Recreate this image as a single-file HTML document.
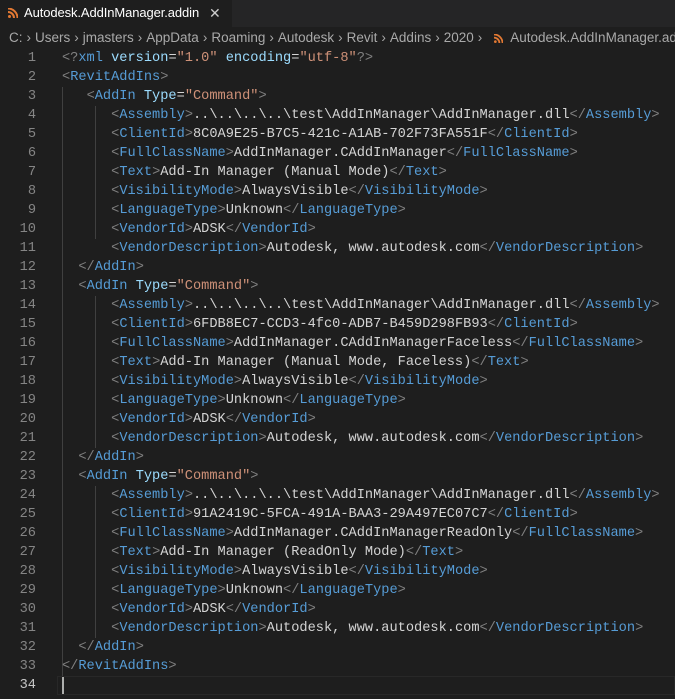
<!DOCTYPE html>
<html><head><meta charset="utf-8"><style>
body{margin:0;width:675px;height:699px;background:#1e1e1e;overflow:hidden;font-family:"Liberation Sans",sans-serif}
.tabbar{height:27px;background:#252526;position:relative}
.tab{position:absolute;left:0;top:0;width:232px;height:27px;background:#1e1e1e;color:#fff;font-size:13px;line-height:26px}
.tab .n{position:absolute;left:24px;letter-spacing:-0.1px}
.tab .x{position:absolute;left:209px;top:0;font-size:14px;color:#ccc}
.rss{position:absolute;width:10px;height:10px}
.bc{position:absolute;top:27px;height:22px;line-height:22px;color:#a9a9a9;font-size:13.5px;white-space:nowrap;left:9px}
.bc i{font-style:normal;margin:0 4px 0 4px}
.ed{position:absolute;top:48.5px;left:0;right:0;font-family:"Liberation Mono",monospace;font-size:13.65px}
.l{height:19px;line-height:19px;position:relative;white-space:pre}
.ln{position:absolute;left:0;width:36px;text-align:right;color:#858585}
.c{position:absolute;left:62px;color:#d4d4d4}
.p{color:#808080}.t{color:#569cd6}.a{color:#9cdcfe}.s{color:#ce9178}
.g{position:absolute;width:1px;background:#404040}
.cur{position:absolute;left:57px;right:0;top:627px;height:17px;border:1px solid #282828}
</style></head><body>
<div class="tabbar"><div class="tab">
<svg class="rss" style="left:8px;top:8px" viewBox="0 0 10 10"><circle cx="1.5" cy="8.5" r="1.5" fill="#e37933"/><path d="M0 4a6 6 0 0 1 6 6M0 0.5a9.5 9.5 0 0 1 9.5 9.5" stroke="#e37933" stroke-width="2" fill="none"/></svg>
<span class="n">Autodesk.AddInManager.addin</span><span class="x">✕</span></div></div>
<div class="bc">C:<i>›</i>Users<i>›</i>jmasters<i>›</i>AppData<i>›</i>Roaming<i>›</i>Autodesk<i>›</i>Revit<i>›</i>Addins<i>›</i>2020<i>›</i><svg style="display:inline-block;vertical-align:-1px;margin:0 7px 0 8px" width="9" height="9" viewBox="0 0 10 10"><circle cx="1.5" cy="8.5" r="1.5" fill="#e37933"/><path d="M0 4a6 6 0 0 1 6 6M0 0.5a9.5 9.5 0 0 1 9.5 9.5" stroke="#e37933" stroke-width="2" fill="none"/></svg>Autodesk.AddInManager.addin</div>
<div class="ed">
<div class="cur"></div>
<div class="g" style="left:62px;top:38px;height:589px"></div>
<div class="g" style="left:95px;top:57px;height:133px"></div>
<div class="g" style="left:95px;top:247px;height:152px"></div>
<div class="g" style="left:95px;top:437px;height:152px"></div>
<div class="l"><span class="ln">1</span><span class="c"><span class="p">&lt;?</span><span class="t">xml</span> <span class="a">version</span>=<span class="s">"1.0"</span> <span class="a">encoding</span>=<span class="s">"utf-8"</span><span class="p">?&gt;</span></span></div>
<div class="l"><span class="ln">2</span><span class="c"><span class="p">&lt;</span><span class="t">RevitAddIns</span><span class="p">&gt;</span></span></div>
<div class="l"><span class="ln">3</span><span class="c">   <span class="p">&lt;</span><span class="t">AddIn</span> <span class="a">Type</span>=<span class="s">"Command"</span><span class="p">&gt;</span></span></div>
<div class="l"><span class="ln">4</span><span class="c">      <span class="p">&lt;</span><span class="t">Assembly</span><span class="p">&gt;</span>..\..\..\..\test\AddInManager\AddInManager.dll<span class="p">&lt;/</span><span class="t">Assembly</span><span class="p">&gt;</span></span></div>
<div class="l"><span class="ln">5</span><span class="c">      <span class="p">&lt;</span><span class="t">ClientId</span><span class="p">&gt;</span>8C0A9E25-B7C5-421c-A1AB-702F73FA551F<span class="p">&lt;/</span><span class="t">ClientId</span><span class="p">&gt;</span></span></div>
<div class="l"><span class="ln">6</span><span class="c">      <span class="p">&lt;</span><span class="t">FullClassName</span><span class="p">&gt;</span>AddInManager.CAddInManager<span class="p">&lt;/</span><span class="t">FullClassName</span><span class="p">&gt;</span></span></div>
<div class="l"><span class="ln">7</span><span class="c">      <span class="p">&lt;</span><span class="t">Text</span><span class="p">&gt;</span>Add-In Manager (Manual Mode)<span class="p">&lt;/</span><span class="t">Text</span><span class="p">&gt;</span></span></div>
<div class="l"><span class="ln">8</span><span class="c">      <span class="p">&lt;</span><span class="t">VisibilityMode</span><span class="p">&gt;</span>AlwaysVisible<span class="p">&lt;/</span><span class="t">VisibilityMode</span><span class="p">&gt;</span></span></div>
<div class="l"><span class="ln">9</span><span class="c">      <span class="p">&lt;</span><span class="t">LanguageType</span><span class="p">&gt;</span>Unknown<span class="p">&lt;/</span><span class="t">LanguageType</span><span class="p">&gt;</span></span></div>
<div class="l"><span class="ln">10</span><span class="c">      <span class="p">&lt;</span><span class="t">VendorId</span><span class="p">&gt;</span>ADSK<span class="p">&lt;/</span><span class="t">VendorId</span><span class="p">&gt;</span></span></div>
<div class="l"><span class="ln">11</span><span class="c">      <span class="p">&lt;</span><span class="t">VendorDescription</span><span class="p">&gt;</span>Autodesk, www.autodesk.com<span class="p">&lt;/</span><span class="t">VendorDescription</span><span class="p">&gt;</span></span></div>
<div class="l"><span class="ln">12</span><span class="c">  <span class="p">&lt;/</span><span class="t">AddIn</span><span class="p">&gt;</span></span></div>
<div class="l"><span class="ln">13</span><span class="c">  <span class="p">&lt;</span><span class="t">AddIn</span> <span class="a">Type</span>=<span class="s">"Command"</span><span class="p">&gt;</span></span></div>
<div class="l"><span class="ln">14</span><span class="c">      <span class="p">&lt;</span><span class="t">Assembly</span><span class="p">&gt;</span>..\..\..\..\test\AddInManager\AddInManager.dll<span class="p">&lt;/</span><span class="t">Assembly</span><span class="p">&gt;</span></span></div>
<div class="l"><span class="ln">15</span><span class="c">      <span class="p">&lt;</span><span class="t">ClientId</span><span class="p">&gt;</span>6FDB8EC7-CCD3-4fc0-ADB7-B459D298FB93<span class="p">&lt;/</span><span class="t">ClientId</span><span class="p">&gt;</span></span></div>
<div class="l"><span class="ln">16</span><span class="c">      <span class="p">&lt;</span><span class="t">FullClassName</span><span class="p">&gt;</span>AddInManager.CAddInManagerFaceless<span class="p">&lt;/</span><span class="t">FullClassName</span><span class="p">&gt;</span></span></div>
<div class="l"><span class="ln">17</span><span class="c">      <span class="p">&lt;</span><span class="t">Text</span><span class="p">&gt;</span>Add-In Manager (Manual Mode, Faceless)<span class="p">&lt;/</span><span class="t">Text</span><span class="p">&gt;</span></span></div>
<div class="l"><span class="ln">18</span><span class="c">      <span class="p">&lt;</span><span class="t">VisibilityMode</span><span class="p">&gt;</span>AlwaysVisible<span class="p">&lt;/</span><span class="t">VisibilityMode</span><span class="p">&gt;</span></span></div>
<div class="l"><span class="ln">19</span><span class="c">      <span class="p">&lt;</span><span class="t">LanguageType</span><span class="p">&gt;</span>Unknown<span class="p">&lt;/</span><span class="t">LanguageType</span><span class="p">&gt;</span></span></div>
<div class="l"><span class="ln">20</span><span class="c">      <span class="p">&lt;</span><span class="t">VendorId</span><span class="p">&gt;</span>ADSK<span class="p">&lt;/</span><span class="t">VendorId</span><span class="p">&gt;</span></span></div>
<div class="l"><span class="ln">21</span><span class="c">      <span class="p">&lt;</span><span class="t">VendorDescription</span><span class="p">&gt;</span>Autodesk, www.autodesk.com<span class="p">&lt;/</span><span class="t">VendorDescription</span><span class="p">&gt;</span></span></div>
<div class="l"><span class="ln">22</span><span class="c">  <span class="p">&lt;/</span><span class="t">AddIn</span><span class="p">&gt;</span></span></div>
<div class="l"><span class="ln">23</span><span class="c">  <span class="p">&lt;</span><span class="t">AddIn</span> <span class="a">Type</span>=<span class="s">"Command"</span><span class="p">&gt;</span></span></div>
<div class="l"><span class="ln">24</span><span class="c">      <span class="p">&lt;</span><span class="t">Assembly</span><span class="p">&gt;</span>..\..\..\..\test\AddInManager\AddInManager.dll<span class="p">&lt;/</span><span class="t">Assembly</span><span class="p">&gt;</span></span></div>
<div class="l"><span class="ln">25</span><span class="c">      <span class="p">&lt;</span><span class="t">ClientId</span><span class="p">&gt;</span>91A2419C-5FCA-491A-BAA3-29A497EC07C7<span class="p">&lt;/</span><span class="t">ClientId</span><span class="p">&gt;</span></span></div>
<div class="l"><span class="ln">26</span><span class="c">      <span class="p">&lt;</span><span class="t">FullClassName</span><span class="p">&gt;</span>AddInManager.CAddInManagerReadOnly<span class="p">&lt;/</span><span class="t">FullClassName</span><span class="p">&gt;</span></span></div>
<div class="l"><span class="ln">27</span><span class="c">      <span class="p">&lt;</span><span class="t">Text</span><span class="p">&gt;</span>Add-In Manager (ReadOnly Mode)<span class="p">&lt;/</span><span class="t">Text</span><span class="p">&gt;</span></span></div>
<div class="l"><span class="ln">28</span><span class="c">      <span class="p">&lt;</span><span class="t">VisibilityMode</span><span class="p">&gt;</span>AlwaysVisible<span class="p">&lt;/</span><span class="t">VisibilityMode</span><span class="p">&gt;</span></span></div>
<div class="l"><span class="ln">29</span><span class="c">      <span class="p">&lt;</span><span class="t">LanguageType</span><span class="p">&gt;</span>Unknown<span class="p">&lt;/</span><span class="t">LanguageType</span><span class="p">&gt;</span></span></div>
<div class="l"><span class="ln">30</span><span class="c">      <span class="p">&lt;</span><span class="t">VendorId</span><span class="p">&gt;</span>ADSK<span class="p">&lt;/</span><span class="t">VendorId</span><span class="p">&gt;</span></span></div>
<div class="l"><span class="ln">31</span><span class="c">      <span class="p">&lt;</span><span class="t">VendorDescription</span><span class="p">&gt;</span>Autodesk, www.autodesk.com<span class="p">&lt;/</span><span class="t">VendorDescription</span><span class="p">&gt;</span></span></div>
<div class="l"><span class="ln">32</span><span class="c">  <span class="p">&lt;/</span><span class="t">AddIn</span><span class="p">&gt;</span></span></div>
<div class="l"><span class="ln">33</span><span class="c"><span class="p">&lt;/</span><span class="t">RevitAddIns</span><span class="p">&gt;</span></span></div>
<div class="l"><span class="ln" style="color:#c6c6c6">34</span><span class="c" style="left:62px;top:1px;width:2px;height:17px;background:#aeafad"></span></div>
</div>
</body></html>
